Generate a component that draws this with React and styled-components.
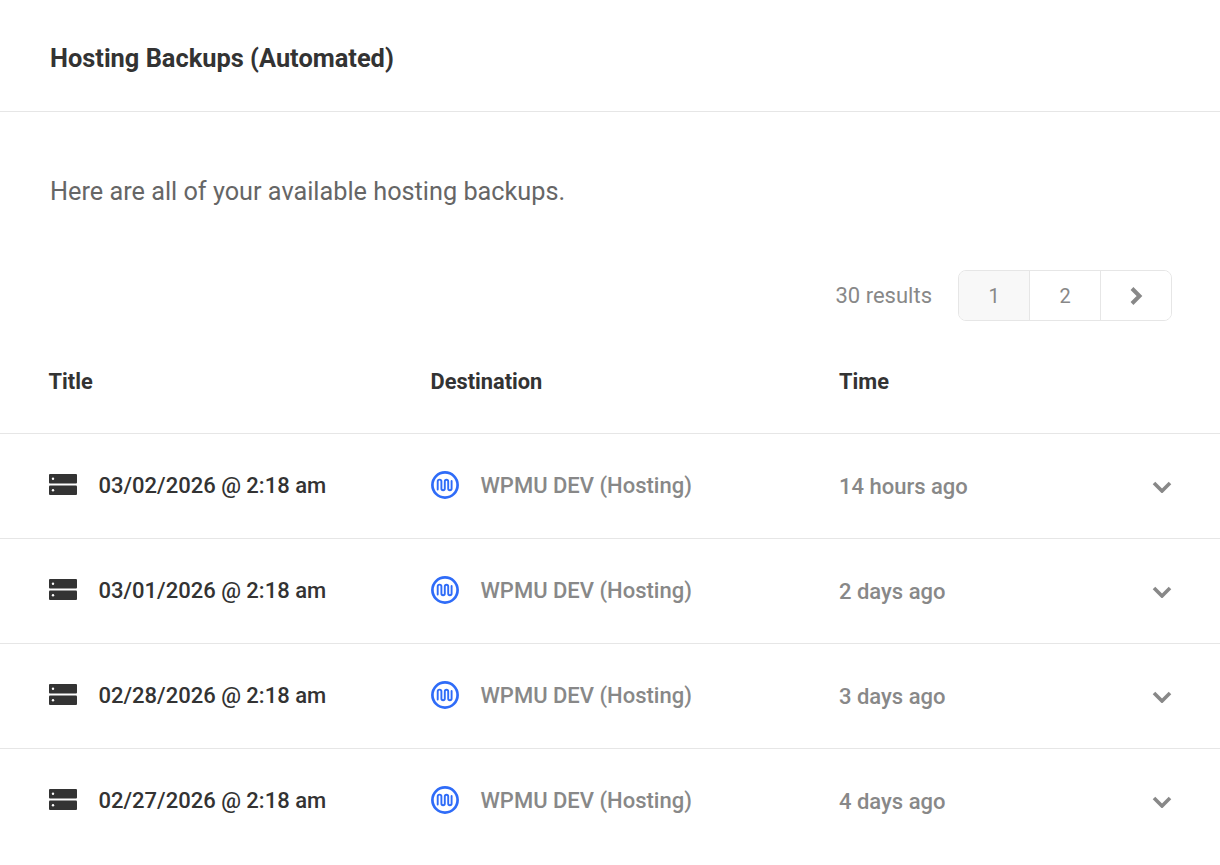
import React from 'react';
import styled, { createGlobalStyle } from 'styled-components';

const Global = createGlobalStyle`
  html, body { margin: 0; padding: 0; background: #fff; height: 100%; overflow: hidden; }
  body { font-family: Roboto, "Liberation Sans", sans-serif; }
`;
const Page = styled.div`width: 1220px; height: 865px; overflow: hidden; background: #fff;`;
const Header = styled.header`
  height: 107px; padding: 4px 50px 0; border-bottom: 1px solid #e6e6e6;
  display: flex; align-items: center;
`;
const Title = styled.h1`margin: 0; font-size: 25.4px; font-weight: 700; color: #333; line-height: 32px;`;
const Body = styled.div`padding: 62px 0 0;`;
const Intro = styled.p`margin: 0 50px; font-size: 25.28px; line-height: 36px; color: #666;`;
const Pager = styled.div`display: flex; justify-content: flex-end; align-items: center; gap: 26px; margin-top: 60px; padding-right: 48px;`;
const Results = styled.span`font-size: 22px; color: #888;`;
const PageButtons = styled.div`display: flex; border: 1px solid #e6e6e6; border-radius: 8px; overflow: hidden; height: 49px;`;
const PageButton = styled.div`
  width: 70px; display: flex; align-items: center; justify-content: center;
  font-size: 20px; color: #888; background: ${p => (p.$active ? '#f8f8f8' : '#fff')};
  & + & { border-left: 1px solid #e6e6e6; }
`;
const Cols = `display: grid; grid-template-columns: 382px 408.5px 1fr 20px; padding: 0 48px 0 48.5px; align-items: center;`;
const HeadRow = styled.div`${Cols} height: 104px; padding-top: 8px; border-bottom: 1px solid #e6e6e6; font-size: 21.8px; font-weight: 700; color: #333;`;
const Row = styled.div`${Cols} height: 102px; padding-bottom: 2px; & + & { border-top: 1px solid #e6e6e6; }`;
const Cell = styled.div`display: flex; align-items: center; min-width: 0;`;
const DateText = styled.span`font-size: 22px; font-weight: 500; color: #333; margin-left: 22px;`;
const Dest = styled.span`font-size: 22px; font-weight: 500; color: #888; margin-left: 22px;`;
const Time = styled.span`font-size: 22px; font-weight: 500; color: #888; padding-top: 2px;`;
const Chevron = styled.div`display: flex; padding-top: 4px;`;
const ServerSvg = styled.svg`display: block; margin-bottom: 1px; flex: none;`;
const WpmuSvg = styled.svg`display: block; flex: none;`;

const ServerIcon = () => (
  <ServerSvg width="28" height="21" viewBox="0 0 28 21">
    <rect y="0" width="28" height="9.5" rx="1" fill="#333" />
    <rect y="11.5" width="28" height="9.5" rx="1" fill="#333" />
    <circle cx="4" cy="4.75" r="1.2" fill="#fff" />
    <circle cx="4" cy="16.25" r="1.2" fill="#fff" />
  </ServerSvg>
);
const WpmuIcon = () => (
  <WpmuSvg width="28" height="28" viewBox="0 0 28 28" fill="none" stroke="#2f6cf8">
    <circle cx="14" cy="14" r="12.6" strokeWidth="2.7" />
    <path d="M6.7 18.5V10.5a1.85 1.85 0 0 1 3.7 0V17.5a1.7 1.7 0 0 0 3.4 0V10.5a1.7 1.7 0 0 1 3.4 0V17.5a1.7 1.7 0 0 0 3.4 0V10" strokeWidth="1.9" strokeLinecap="round" />
  </WpmuSvg>
);
const Down = () => (
  <svg width="20" height="12" viewBox="0 0 20 12" fill="none" stroke="#888" strokeWidth="3.6">
    <path d="M2 2l8 8 8-8" />
  </svg>
);
const Right = () => (
  <svg width="14" height="20" viewBox="0 0 14 20" fill="none" stroke="#888" strokeWidth="4">
    <path d="M3 2.5l7.5 7.5-7.5 7.5" />
  </svg>
);

const rows = [
  ['03/02/2026 @ 2:18 am', '14 hours ago'],
  ['03/01/2026 @ 2:18 am', '2 days ago'],
  ['02/28/2026 @ 2:18 am', '3 days ago'],
  ['02/27/2026 @ 2:18 am', '4 days ago'],
];

export default function App() {
  return (
    <Page>
      <Global />
      <Header><Title>Hosting Backups (Automated)</Title></Header>
      <Body>
        <Intro>Here are all of your available hosting backups.</Intro>
        <Pager>
          <Results>30 results</Results>
          <PageButtons>
            <PageButton $active>1</PageButton>
            <PageButton>2</PageButton>
            <PageButton><Right /></PageButton>
          </PageButtons>
        </Pager>
        <HeadRow><div>Title</div><div>Destination</div><div>Time</div><div /></HeadRow>
        {rows.map(([d, t]) => (
          <Row key={d}>
            <Cell><ServerIcon /><DateText>{d}</DateText></Cell>
            <Cell><WpmuIcon /><Dest>WPMU DEV (Hosting)</Dest></Cell>
            <Cell><Time>{t}</Time></Cell>
            <Chevron><Down /></Chevron>
          </Row>
        ))}
      </Body>
    </Page>
  );
}
